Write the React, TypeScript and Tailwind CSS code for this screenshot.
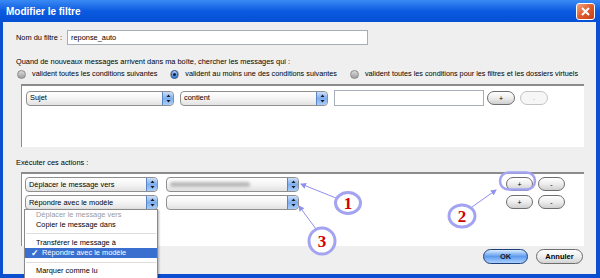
import React from 'react';

const font = { fontFamily: '"Liberation Sans", Arial, sans-serif' };

const Spinner = () => (
  <div className="w-[11px] h-full rounded-r-[4px] border-l border-[#5b86c4] bg-gradient-to-b from-[#c9defa] via-[#7eaef0] to-[#a9cdfa] flex items-center justify-center">
    <svg width="5" height="9" viewBox="0 0 5 9">
      <path d="M2.5 0.5 L4.5 3 L0.5 3 Z" fill="#1a1a1a" />
      <path d="M2.5 8.5 L4.5 6 L0.5 6 Z" fill="#1a1a1a" />
    </svg>
  </div>
);

const Select = ({ w, label, blur }: { w: string; label?: string; blur?: boolean }) => (
  <div className={`${w} h-[15px] rounded-[4px] border border-[#8f8f8f] bg-gradient-to-b from-white via-[#f4f4f4] to-[#e2e2e2] flex items-stretch overflow-hidden`}>
    <div className="flex-1 flex items-center pl-[3px] text-[7.4px] text-black leading-none whitespace-nowrap">
      {blur ? <div className="w-[80px] h-[5px] rounded bg-[#b9b9b9] blur-[1.5px]" /> : label}
    </div>
    <Spinner />
  </div>
);

const Pill = ({ label, dim, w = 'w-[28px]' }: { label: string; dim?: boolean; w?: string }) => (
  <div
    className={`${w} h-[14px] rounded-full border flex items-center justify-center text-[7px] leading-none ${
      dim ? 'border-[#c4c4c4] text-[#c4c4c4] bg-[#f6f6f6]' : 'border-[#6e6e6e] text-black bg-gradient-to-b from-white via-[#ededed] to-[#cfcfcf]'
    }`}
  >
    {label}
  </div>
);

const Radio = ({ on, label }: { on?: boolean; label: string }) => (
  <div className="flex items-center gap-[6px] whitespace-nowrap">
    <div className="w-[9px] h-[9px] rounded-full border border-[#8a8a8a] bg-gradient-to-b from-[#dcdcdc] to-[#9d9d9d] flex items-center justify-center">
      {on && <div className="w-[9px] h-[9px] rounded-full bg-gradient-to-b from-[#a9cbf5] to-[#3c7ad6] border border-[#2f5ea3] flex items-center justify-center"><div className="w-[3px] h-[3px] rounded-full bg-[#0c1f3f]" /></div>}
    </div>
    <span>{label}</span>
  </div>
);

const Annotations = () => (
  <svg className="absolute inset-0 pointer-events-none" width="600" height="278" viewBox="0 0 600 278">
    <defs>
      <marker id="ah" markerWidth="6" markerHeight="6" refX="5" refY="3" orient="auto">
        <path d="M0 0 L6 3 L0 6 Z" fill="#8f8fef" />
      </marker>
    </defs>
    <rect x="500" y="172.5" width="35" height="17" rx="8.5" fill="none" stroke="#a3a3f2" strokeWidth="2.5" />
    <line x1="336" y1="198" x2="301" y2="184" stroke="#8f8fef" strokeWidth="1" markerEnd="url(#ah)" />
    <line x1="316" y1="229" x2="299" y2="206" stroke="#8f8fef" strokeWidth="1" markerEnd="url(#ah)" />
    <line x1="472" y1="207" x2="496" y2="190" stroke="#8f8fef" strokeWidth="1" markerEnd="url(#ah)" />
    {[
      { cx: 348, cy: 203, rx: 12.5, ry: 10.5, t: '1' },
      { cx: 322, cy: 241, rx: 13, ry: 13, t: '3' },
      { cx: 462, cy: 216, rx: 13, ry: 11, t: '2' },
    ].map((c) => (
      <g key={c.t}>
        <ellipse cx={c.cx} cy={c.cy} rx={c.rx} ry={c.ry} fill="white" stroke="#a3a3f2" strokeWidth="3" />
        <text x={c.cx} y={c.cy + 6} textAnchor="middle" fontFamily='"Liberation Serif", serif' fontWeight="bold" fontSize="17" fill="#d40000">
          {c.t}
        </text>
      </g>
    ))}
  </svg>
);

export default function App() {
  return (
    <div className="relative w-[600px] h-[278px] overflow-hidden bg-[#0b4fd0] flex flex-col" style={font}>
      {/* title bar */}
      <div className="h-[22px] shrink-0 bg-gradient-to-b from-[#3a8af5] via-[#0a5ae0] to-[#0650d4] flex items-center justify-between pl-[6px] pr-[5px]">
        <span className="text-white font-bold text-[10px]">Modifier le filtre</span>
        <div className="w-[19px] h-[17px] rounded-[3px] border border-white bg-gradient-to-br from-[#f2a27f] via-[#e05a2b] to-[#c5401a] flex items-center justify-center">
          <svg width="9" height="9" viewBox="0 0 9 9"><path d="M1 1 L8 8 M8 1 L1 8" stroke="white" strokeWidth="2" /></svg>
        </div>
      </div>

      {/* body */}
      <div className="flex-1 ml-[3px] mr-[4px] mb-[4px] bg-[#efefef] flex flex-col text-[7.4px] text-black leading-[10px]">
        <div className="flex items-center mt-[8px] ml-[13px] gap-[5px]">
          <span>Nom du filtre :</span>
          <div className="w-[301px] h-[15px] bg-white border border-[#a5adb8] flex items-center pl-[3px]">reponse_auto</div>
        </div>

        <div className="mt-[12px] ml-[13px] whitespace-nowrap">Quand de nouveaux messages arrivent dans ma boîte, chercher les messages qui :</div>
        <div className="mt-[2px] ml-[14px] flex items-center gap-[13px] h-[10px] text-[7.25px]">
          <Radio label="valident toutes les conditions suivantes" />
          <Radio on label="valident au moins une des conditions suivantes" />
          <Radio label="valident toutes les conditions pour les filtres et les dossiers virtuels" />
        </div>

        <div className="mt-[5px] ml-[18px] w-[563px] h-[63px] shrink-0 bg-white border-t-2 border-l border-[#8c8c8c] pl-[4px] pt-[4px]">
          <div className="flex items-center">
            <Select w="w-[148px]" label="Sujet" />
            <div className="w-[6px]" />
            <Select w="w-[148px]" label="contient" />
            <div className="w-[6px]" />
            <div className="w-[150px] h-[16px] border border-[#a5adb8] bg-white" />
            <div className="w-[3px]" />
            <Pill label="+" />
            <div className="w-[5px]" />
            <Pill label="-" dim />
          </div>
        </div>

        <div className="mt-[11px] ml-[13px]">Exécuter ces actions :</div>

        <div className="relative mt-[4px] ml-[18px] w-[563px] h-[74px] shrink-0 bg-white border-t-2 border-l border-[#8c8c8c] pl-[3px] pt-[3px]">
          <div className="flex items-start">
            <div className="flex flex-col gap-[3px]">
              <div className="flex items-center gap-[8px]">
                <Select w="w-[133px]" label="Déplacer le message vers" />
                <Select w="w-[133px]" blur />
              </div>
              <div className="flex items-center gap-[8px]">
                <Select w="w-[133px]" label="Répondre avec le modèle" />
                <Select w="w-[133px]" />
              </div>
            </div>
            <div className="ml-auto mr-[19px] flex flex-col gap-[4px]">
              <div className="flex gap-[5px]"><Pill label="+" w="w-[27px]" /><Pill label="-" w="w-[27px]" /></div>
              <div className="flex gap-[5px]"><Pill label="+" w="w-[27px]" /><Pill label="-" w="w-[27px]" /></div>
            </div>
          </div>
        </div>

        <div className="flex justify-end gap-[8px] mt-[3px] mr-[13px]">
          <div className="w-[45px] h-[15px] rounded-full border border-[#1d3f7a] bg-gradient-to-b from-[#d9ebff] via-[#5e9bec] to-[#a9d0ff] flex items-center justify-center text-[7.5px] font-bold text-[#0b1b3a]">OK</div>
          <div className="w-[47px] h-[15px] rounded-full border border-[#6e6e6e] bg-gradient-to-b from-white via-[#eeeeee] to-[#d3d3d3] flex items-center justify-center text-[7.5px] font-bold">Annuler</div>
        </div>
      </div>

      {/* open dropdown menu */}
      <div className="absolute left-[24px] top-[209px] w-[134px] h-[72px] bg-white border border-[#8a8a8a] shadow-[1px_1px_2px_rgba(0,0,0,0.3)] text-[7.4px] leading-[10px] flex flex-col whitespace-nowrap">
        <div className="pl-[11px] h-[10px] text-[#9a9a9a]">Déplacer le message vers</div>
        <div className="pl-[11px] h-[10px]">Copier le message dans</div>
        <div className="mt-[3px] mb-[4px] mx-[1px] border-t border-[#dedede]" />
        <div className="pl-[11px] h-[10px]">Transférer le message à</div>
        <div className="bg-[#3a6fd0] text-white flex items-center h-[10px] pl-[6px]">
          <span className="w-[11px] text-[9px] font-bold">✓</span>Répondre avec le modèle
        </div>
        <div className="mt-[4px] mb-[3px] mx-[1px] border-t border-[#dedede]" />
        <div className="pl-[11px] h-[10px]">Marquer comme lu</div>
      </div>

      <Annotations />
    </div>
  );
}
